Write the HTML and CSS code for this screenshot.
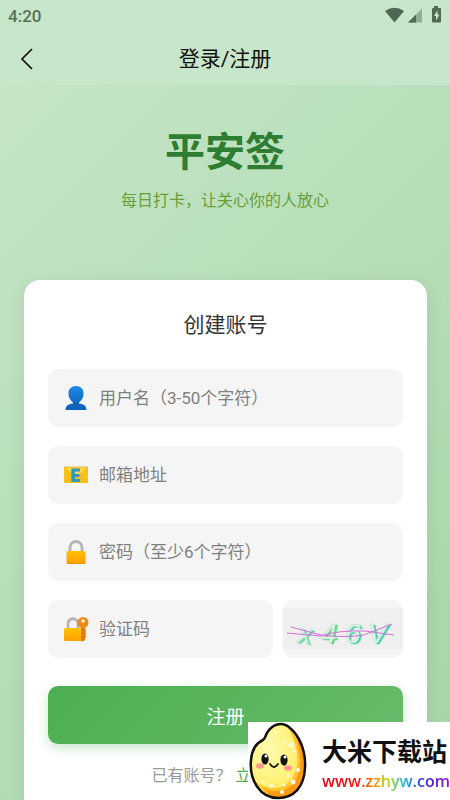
FILE: index.html
```html
<!DOCTYPE html>
<html lang="zh-CN">
<head>
    <meta charset="UTF-8">
    <meta name="viewport" content="width=device-width, initial-scale=1.0">
    <title>登录/注册</title>
    <link rel="stylesheet" href="styles.css">
</head>
<body>
    <div class="top">
        <div class="status-bar">
            <span>4:20</span>
            <svg class="status-icons" width="58" height="20" viewBox="0 0 58 20">
                <path d="M1 5 Q10.500 -1.500 20 5 L10.500 16.500 Z" fill="#4f6753"/>
                <path d="M24 16.500 L38 2.500 V16.500 Z" fill="#93ae96"/>
                <path d="M24 16.500 L32 8.500 V16.500 Z" fill="#4f6753"/>
                <path d="M50 0 H54 V2 H56 Q57 2 57 3 V15.500 Q57 16.500 56 16.500 H49 Q48 16.500 48 15.500 V3 Q48 2 49 2 H50 Z" fill="#4f6753"/>
                <path d="M53.500 4 L50 10 H52 V14.500 L55.500 8.500 H53.500 Z" fill="#c8e6c9"/>
            </svg>
        </div>
        <header class="nav-bar">
            <button class="back" type="button" aria-label="返回">
                <svg width="14" height="22" viewBox="0 0 14 22"><path d="M12 1 L2 11 L12 21" fill="none" stroke="#111" stroke-width="1.700"/></svg>
            </button>
            <div class="nav-title">登录/注册</div>
        </header>
    </div>

    <div class="hero">
        <h1>平安签</h1>
        <p>每日打卡，让关心你的人放心</p>
    </div>

    <form class="card">
        <h2>创建账号</h2>

        <label class="field">
            <svg class="icon" viewBox="0 0 26 26">
                <defs>
                    <linearGradient id="blue" x1="0" y1="0" x2="0" y2="1"><stop offset="0" stop-color="#1e88e5"/><stop offset="1" stop-color="#0861b8"/></linearGradient>
                </defs>
                <path d="M13 1 C17.500 1 20.500 4 20.500 8 C20.500 10 20.300 11 20 12 C19 15 17 16.500 16 17.500 V18.500 C20 19 23.500 20.500 23.500 25 H2.500 C2.500 20.500 6 19 10 18.500 V17.500 C9 16.500 7 15 6 12 C5.700 11 5.500 10 5.500 8 C5.500 4 8.500 1 13 1 Z" fill="url(#blue)"/>
                <path d="M10 17.500 Q13 19.300 16 17.500 V18.500 Q13 21 10 18.500 Z" fill="#0a559f"/>
            </svg>
            <input type="text" placeholder="用户名（3-50个字符）" aria-label="用户名">
        </label>

        <label class="field">
            <svg class="icon" viewBox="0 0 26 26">
                <rect x="1" y="5" width="24" height="16" rx="1" fill="#fcc21b"/>
                <path d="M1 20.500 L10 12 M25 20.500 L16 12" stroke="#f6a91c" stroke-width="0.800"/>
                <path d="M1 5.500 L12 15 Q13 16 14 15 L25 5.500 V5 H1 Z" fill="#ffd54a" stroke="#f2a713" stroke-width="0.700"/>
                <path d="M9 6.500 H17 V9.500 H12 V12 H16.500 V15 H12 V17 H17.200 V20 H8.300 V7 Z" fill="#3598b8"/>
            </svg>
            <input type="email" placeholder="邮箱地址" aria-label="邮箱地址">
        </label>

        <label class="field">
            <svg class="icon" viewBox="0 0 26 26">
                <defs>
                    <linearGradient id="gold" x1="0" y1="0" x2="0" y2="1"><stop offset="0" stop-color="#ffc107"/><stop offset="1" stop-color="#ff9f00"/></linearGradient>
                </defs>
                <path d="M7 14 V8.500 C7 0.500 19 0.500 19 8.500 V14" fill="none" stroke="#b4b4b4" stroke-width="2.800"/>
                <rect x="3.500" y="12" width="19" height="13" rx="1.500" fill="url(#gold)"/>
                <path d="M4 24.500 H22" stroke="#ec8f00" stroke-width="0.900"/>
            </svg>
            <input type="password" placeholder="密码（至少6个字符）" aria-label="密码">
        </label>

        <div class="code-row">
            <label class="field">
                <svg class="icon" viewBox="0 0 26 26">
                    <path d="M5 14 V8 C5 1 15 1 15 8 V14" fill="none" stroke="#b4b4b4" stroke-width="2.800"/>
                    <rect x="1" y="12" width="18.500" height="13" rx="1.500" fill="url(#gold)"/>
                    <path d="M18 9 H22 V13 L23.500 14.500 L22 16 L23.500 17.500 L22 19 L23.500 20.500 L22 22 V24 L20 25.500 L18 24 Z" fill="#df7c0b"/>
                    <circle cx="20" cy="6.500" r="5.500" fill="#ee8b17"/>
                    <circle cx="20" cy="5" r="1.800" fill="#f5f5f5"/>
                </svg>
                <input type="text" placeholder="验证码" aria-label="验证码">
            </label>
            <button class="captcha" type="button" aria-label="刷新验证码">
                <svg viewBox="0 0 120 58">
                    <rect y="9" width="120" height="40" fill="#efefef"/>
                    <text class="mint" x="15" y="43" font-size="26" transform="rotate(7 22 38)">x</text>
                    <text class="green" x="38" y="43" font-size="28">4</text>
                    <text class="teal" x="62" y="43" font-size="28">6</text>
                    <text class="teal" x="85" y="43" font-size="28">V</text>
                    <path d="M8 27 L38 35 Q62 38 81 35 L109 24" fill="none" stroke="#d66edb"/>
                    <path d="M4 33 L38 36 Q56 30 82 31 L111 35" fill="none" stroke="#d66edb"/>
                </svg>
            </button>
        </div>

        <button class="submit" type="submit">注册</button>
        <p class="switch">已有账号？<a href="#">立即登录</a></p>
    </form>

    <div class="site-mark">
        <svg class="rice" width="60" height="78" viewBox="0 0 60 78">
            <defs>
                <radialGradient id="rice" cx="0.350" cy="0.350" r="0.750"><stop offset="0" stop-color="#fffcb0"/><stop offset="0.600" stop-color="#fff176"/><stop offset="1" stop-color="#ffd32f"/></radialGradient>
                <clipPath id="shape"><path d="M19 11 C24 2 34 -1 42 6 C52 14 58 30 57 46 C56 65 46 76 30 76 C12 76 1 58 3 38 C4 27 8 21 15 18 C18 16 17 14 19 11 Z"/></clipPath>
            </defs>
            <g clip-path="url(#shape)">
                <rect width="60" height="78" fill="url(#rice)"/>
                <path d="M38 2 C51 22 55 49 39 62 C29 69 16 66 8 60 L24 78 H60 V0 Z" fill="#ffc52c"/>
                <path d="M44 5 C55 30 55 52 43 64 C34 71 23 70 15 66 L26 78 H60 V0 Z" fill="#ff9a12"/>
            </g>
            <path d="M19 11 C24 2 34 -1 42 6 C52 14 58 30 57 46 C56 65 46 76 30 76 C12 76 1 58 3 38 C4 27 8 21 15 18 C18 16 17 14 19 11 Z" fill="none" stroke="#111" stroke-width="2.500"/>
            <g fill="#fffde5">
                <circle cx="43" cy="23" r="2.500"/><circle cx="37" cy="20" r="1.200"/><circle cx="46" cy="29" r="1.500"/><circle cx="28" cy="10" r="1.500"/><circle cx="22" cy="17" r="1.300"/>
                <circle cx="50" cy="48" r="2"/><circle cx="45" cy="60" r="2.500"/><circle cx="36" cy="63" r="1.500"/><circle cx="34" cy="70" r="2"/><circle cx="23" cy="64" r="2"/><circle cx="15" cy="60" r="1.500"/><circle cx="40" cy="54" r="1.500"/>
            </g>
            <ellipse cx="17" cy="37" rx="3.600" ry="5.500" fill="#111"/>
            <ellipse cx="36" cy="38" rx="3.600" ry="5.500" fill="#111"/>
            <circle cx="18" cy="34" r="1.500" fill="#fff"/><circle cx="37" cy="35" r="1.500" fill="#fff"/>
            <ellipse cx="12" cy="44" rx="4" ry="2.800" fill="#ff968b"/>
            <ellipse cx="40" cy="46" rx="4" ry="2.800" fill="#ff968b"/>
            <path d="M22 42 Q26 48 30 42" fill="none" stroke="#111" stroke-width="1.800" stroke-linecap="round"/>
        </svg>
        <div class="site-text">
            <div class="site-name">大米下载站</div>
            <div class="site-url">www.zzhyw.com</div>
        </div>
    </div>
</body>
</html>
```

FILE: styles.css
```css
* {
    box-sizing: border-box;
}
body {
    margin: 0;
    min-height: 100vh;
    display: flex;
    flex-direction: column;
    font-family: Roboto, "Noto Sans CJK SC", sans-serif;
    background: linear-gradient(135deg, #c8e6c9 0%, #a5d6a7 100%);
}
h1, h2, p {
    margin: 0;
}
button, input {
    font-family: inherit;
    border: none;
    padding: 0;
}
.top {
    background: #c8e6c9;
}
.status-bar {
    height: 32px;
    padding: 0 8px;
    display: flex;
    align-items: center;
    justify-content: space-between;
    font-size: 17px;
    font-weight: 500;
    color: #567059;
}
.nav-bar {
    height: 53px;
    padding: 0 20px;
    display: grid;
    grid-template-columns: 24px 1fr 24px;
    align-items: center;
}
.back {
    height: 24px;
    background: none;
    display: flex;
    align-items: center;
    cursor: pointer;
}
.nav-title {
    font-size: 21px;
    line-height: 30px;
    text-align: center;
    color: #111;
}
.hero {
    padding: 38px 24px 67px;
    text-align: center;
}
.hero h1 {
    font-size: 40px;
    line-height: 60px;
    font-weight: 700;
    color: #2e7d32;
}
.hero p {
    margin-top: 6px;
    font-size: 16px;
    line-height: 24px;
    color: #689f38;
}
.card {
    flex: 1;
    margin: 0 23px 0 24px;
    padding: 24px 24px 12px;
    background: #fff;
    border-radius: 16px 16px 0 0;
    box-shadow: 0 4px 20px rgba(0, 0, 0, 0.08);
}
.card h2 {
    margin: 6px 0 28px;
    font-size: 21px;
    line-height: 31px;
    font-weight: 400;
    text-align: center;
    color: #333;
}
.field {
    height: 58px;
    margin-bottom: 19px;
    padding: 0 15px;
    display: flex;
    align-items: center;
    gap: 10px;
    background: #f5f5f5;
    border-radius: 10px;
}
.icon {
    flex: none;
    width: 26px;
    height: 26px;
}
.field input {
    flex: 1;
    min-width: 0;
    height: 30px;
    font-size: 17px;
    background: none;
    outline: none;
    color: #333;
}
.field input::placeholder {
    color: #808080;
}
.code-row {
    display: flex;
    gap: 10px;
}
.code-row .field {
    flex: 1;
    min-width: 0;
    margin-bottom: 0;
}
.captcha {
    flex: none;
    width: 120px;
    height: 58px;
    overflow: hidden;
    background: #f5f5f5;
    border-radius: 10px;
    cursor: pointer;
}
.captcha svg {
    display: block;
    width: 100%;
    height: 100%;
}
.captcha text {
    font-family: "Liberation Sans", sans-serif;
    font-style: italic;
    fill: #e6f3ec;
    stroke: #a5dfc3;
    stroke-width: 0.5;
    filter: drop-shadow(2px 1px 0 currentColor);
}
.mint {
    color: #62d59a;
}
.green {
    color: #62d982;
}
.teal {
    color: #55ceb6;
}
.submit {
    display: block;
    width: 100%;
    height: 58px;
    margin-top: 28px;
    font-size: 19px;
    color: #fff;
    background: linear-gradient(135deg, #4caf50, #66bb6a);
    border-radius: 10px;
    box-shadow: 0 4px 12px rgba(76, 175, 80, 0.3);
    cursor: pointer;
}
.switch {
    margin-top: 20px;
    font-size: 16px;
    line-height: 24px;
    text-align: center;
    color: #999;
}
.switch a {
    margin-left: 4px;
    color: #4caf50;
    text-decoration: none;
}
.site-mark {
    position: fixed;
    right: 0;
    bottom: 0;
    height: 78px;
    padding-right: 2px;
    display: flex;
    gap: 14px;
    background: #fff;
    white-space: nowrap;
}
.rice {
    flex: none;
}
.site-text {
    width: 126px;
    padding-top: 13px;
}
.site-name {
    font-size: 25px;
    line-height: 36px;
    font-weight: 700;
    color: #111;
}
.site-url {
    width: max-content;
    font-family: "Open Sans", sans-serif;
    font-size: 16px;
    line-height: 21px;
    font-weight: 600;
    color: transparent;
    background: linear-gradient(90deg, #e60012 0%, #f01d0c 30%, #ff9800 42%, #b4d816 52%, #20b8d8 64%, #2058e8 74%, #4a22d0 85%, #a010d0 100%);
    -webkit-background-clip: text;
    background-clip: text;
}
```
